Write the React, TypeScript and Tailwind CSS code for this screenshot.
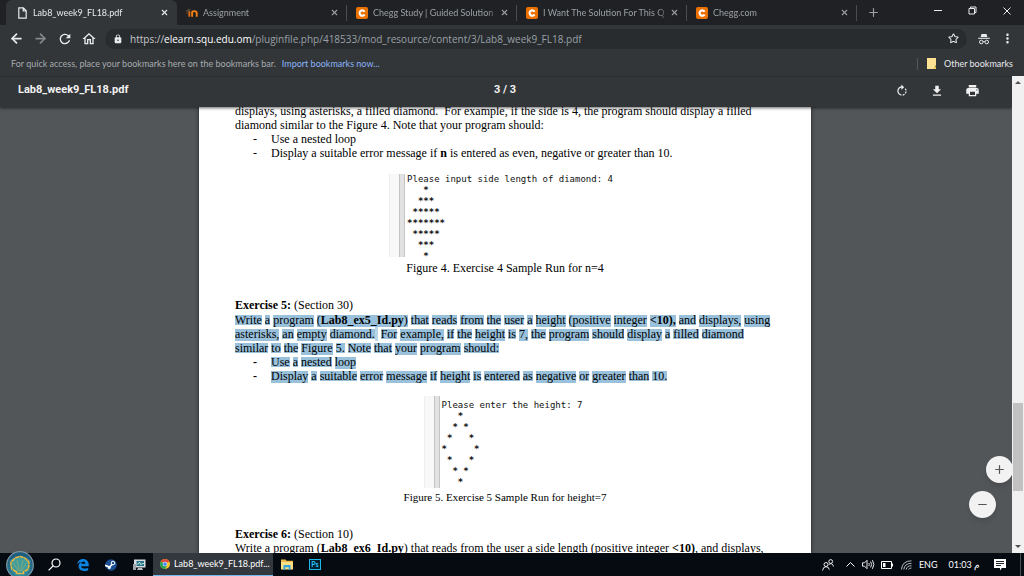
import React from "react";
import { ArrowLeft, ArrowRight, Star, X, Plus, Minus } from "lucide-react";
import { MdRefresh, MdOutlineHome, MdLock, MdRotateRight, MdFileDownload, MdPrint, MdMoreVert } from "react-icons/md";

function FileIcon() {
  return (
    <svg viewBox="0 0 9 12" className="h-3 w-[9px]" fill="none" stroke="#e8eaed" strokeWidth="1.2">
      <path d="M.8.8h4.6L8.2 3.8v7.3H.8zM5.2.8v3.2h3" />
    </svg>
  );
}

function MoodleIcon() {
  return (
    <svg viewBox="0 0 13 10" className="h-2.5 w-[13px]" fill="none">
      <path d="M.5 2.5 3.5 1.2 5 2" stroke="#6b5a4c" strokeWidth="1.2" />
      <path d="M3.6 9V3" stroke="#d9701a" strokeWidth="2" />
      <path d="M1.2 3v3" stroke="#7d4a25" strokeWidth="1" />
      <path d="M6.6 9V4.6Q6.6 3 8.8 3 11.6 3 11.6 5V9" stroke="#f98012" strokeWidth="2" />
    </svg>
  );
}

function CheggIcon() {
  return (
    <svg viewBox="0 0 12 12" className="size-3">
      <rect width="12" height="12" rx="2" fill="#eb7100" />
      <path d="M8.6 4.7A2.7 2.7 0 1 0 8.6 7.5" fill="none" stroke="#fff" strokeWidth="2.1" />
    </svg>
  );
}

const tabs = [
  { title: "Lab8_week9_FL18.pdf", icon: <FileIcon />, active: true },
  { title: "Assignment", icon: <MoodleIcon />, active: false },
  { title: "Chegg Study | Guided Solution", icon: <CheggIcon />, active: false },
  { title: "I Want The Solution For This Q", icon: <CheggIcon />, active: false },
  { title: "Chegg.com", icon: <CheggIcon />, active: false },
];

function TabStrip() {
  return (
    <div className="flex h-[25px] shrink-0 bg-[#202124] pl-[6px] text-[#9aa0a6]">
      {tabs.map((t, i) => (
        <div
          key={i}
          className={
            t.active
              ? "flex max-w-[171px] min-w-0 flex-1 items-center rounded-t-md bg-[#323639] pr-2 pl-[10px] text-[#e8eaed]"
              : "flex max-w-[170px] min-w-0 flex-1 items-center pl-[9px]"
          }
        >
          <span className="flex w-3 shrink-0 justify-center">{t.icon}</span>
          <a
            href="#tab"
            className="ml-[5px] min-w-0 flex-1 overflow-hidden mask-r-from-90% text-[9px] leading-3 whitespace-nowrap"
          >
            {t.title}
          </a>
          <button aria-label={"Close " + t.title} className={t.active ? "" : "mr-[7px]"}>
            <X size={9} strokeWidth={3} />
          </button>
          {!t.active && <span className="h-4 w-px bg-[#4a4c50]" />}
        </div>
      ))}
      <button aria-label="New tab" className="ml-[10px]">
        <Plus size={13} strokeWidth={2.2} />
      </button>
      <div className="ml-auto flex h-[21px] items-center text-[#e8eaed]">
        <button aria-label="Minimize" className="flex w-[34px] justify-center">
          <span className="h-px w-2 bg-[#e8eaed]" />
        </button>
        <button aria-label="Restore" className="flex w-[34px] justify-center">
          <svg viewBox="0 0 9 9" className="size-[9px]" fill="none" stroke="currentColor">
            <path d="M1 2.5h5.500V8H1zM2.500 2.500V1H8v5.500H6.500" />
          </svg>
        </button>
        <button aria-label="Close window" className="flex w-[35px] justify-center">
          <svg viewBox="0 0 8 8" className="size-2" fill="none" stroke="currentColor">
            <path d="M.5.5l7 7M7.500.5l-7 7" />
          </svg>
        </button>
      </div>
    </div>
  );
}

function Toolbar() {
  return (
    <div className="flex h-[27px] shrink-0 items-center bg-[#323639] pl-[9px] text-[#e8eaed]">
      <button aria-label="Back" className="w-6"><ArrowLeft size={15} strokeWidth={2.8} /></button>
      <button aria-label="Forward" className="w-6 text-[#85888b]"><ArrowRight size={15} strokeWidth={2.8} /></button>
      <button aria-label="Reload" className="w-6"><MdRefresh size={16} /></button>
      <button aria-label="Home" className="w-6"><MdOutlineHome size={16} /></button>
      <div className="flex h-5 min-w-0 flex-1 items-center rounded-full bg-[#282c2f] pr-2 pl-2">
        <MdLock size={10} className="shrink-0" />
        <a href="#address" className="ml-[7px] font-['Open_Sans',sans-serif] text-[10px] leading-4 whitespace-nowrap text-[#9aa0a6]">
          <span className="text-[#c6c9cd]">https://</span><span className="text-white">elearn.squ.edu.om</span>/pluginfile.php/418533/mod_resource/content/3/Lab8_week9_FL18.pdf
        </a>
        <button aria-label="Bookmark this page" className="ml-auto"><Star size={11} strokeWidth={2.2} /></button>
      </div>
      <svg viewBox="0 0 12 12" className="mr-[10px] ml-[11px] size-3" fill="none" stroke="currentColor">
        <path d="M3.4 1h5.2l.7 3H2.7z" fill="currentColor" stroke="none" />
        <path d="M.3 5.300h11.400" strokeWidth="1.100" />
        <circle cx="3.300" cy="9" r="1.800" />
        <circle cx="8.700" cy="9" r="1.800" />
        <path d="M5.200 8.600h1.600" />
      </svg>
      <button aria-label="Menu" className="mr-[9px]"><MdMoreVert size={15} /></button>
    </div>
  );
}

function Bookmarks() {
  return (
    <div className="flex h-6 shrink-0 items-center bg-[#323639] px-[11px] pb-px text-[9px] whitespace-nowrap text-[#a6abaf]">
      <span>For quick access, place your bookmarks here on the bookmarks bar.</span>
      <a href="#import" className="ml-[6px] text-[#8ab4f8]">Import bookmarks now...</a>
      <span className="ml-auto h-3 w-px bg-[#56595c]" />
      <svg viewBox="0 0 9 11" className="mr-2 ml-[9px] h-[11px] w-[9px]">
        <path d="M0 0h9v7.500L8 8v3H0z" fill="#fde293" />
        <path d="M7 8.500h2V11H7z" fill="#f7cb4d" />
      </svg>
      <a href="#other" className="text-[#e8eaed]">Other bookmarks</a>
    </div>
  );
}

function ViewerBar() {
  return (
    <div className="relative z-10 grid h-[31px] shrink-0 grid-cols-3 items-center border-t border-[#292c2f] bg-[#323639] pr-[32px] pb-[3px] pl-[18px] font-[Roboto,sans-serif] text-[11px] font-bold text-[#f1f1f1] shadow-[0_1px_3px_rgba(0,0,0,0.6)]">
      <h1>Lab8_week9_FL18.pdf</h1>
      <span className="pl-[12px] text-center">3&nbsp;/&nbsp;3</span>
      <div className="flex justify-end gap-[21px]">
        <button aria-label="Rotate"><MdRotateRight size={14} /></button>
        <button aria-label="Download"><MdFileDownload size={14} /></button>
        <button aria-label="Print"><MdPrint size={15} /></button>
      </div>
    </div>
  );
}

function Sel({ text, bold = false }: { text: string; bold?: boolean }) {
  const words = text.split(" ");
  return (
    <>
      {words.map((w, i) => (
        <React.Fragment key={i}>
          <span
            className={
              (/[gpqyj,()]/.test(w)
                ? "bg-[length:100%_12px] "
                : "bg-[length:100%_10px] ") +
              "bg-linear-to-b from-[#99c1dc] to-[#99c1dc] bg-[position:0_2px] bg-no-repeat" +
              (bold ? " font-bold" : "")
            }
          >
            {w}
          </span>
          {i < words.length - 1 ? " " : ""}
        </React.Fragment>
      ))}
    </>
  );
}

function Bullet({ children, strong = false }: { children: React.ReactNode; strong?: boolean }) {
  return (
    <li className="flex">
      <span className={strong ? "w-[18px] font-bold" : "w-[18px]"}>-</span>
      <span>{children}</span>
    </li>
  );
}

function Run({ prompt, stars, className, textClass = "" }: { prompt: string; stars: string; className: string; textClass?: string }) {
  return (
    <div className={"flex " + className}>
      <span className="w-2.5 border-l border-[#eeeeee] bg-[#f8f8f8]" />
      <span className="mr-[2px] w-[6px] border-x border-[#c4c4c4] bg-[#e2e2e2]" />
      <div className={"font-['DejaVu_Sans_Mono',monospace] text-[9px] leading-[11px] text-[#111] " + textClass}>
        <p>{prompt}</p>
        <pre className="font-['DejaVu_Sans_Mono',monospace] font-bold">{stars}</pre>
      </div>
    </div>
  );
}

const filled = `   *
  ***
 *****
*******
 *****
  ***
   *`;

const hollow = `   *
  * *
 *   *
*     *
 *   *
  * *
   *`;

function Document() {
  return (
    <article className="mr-0.5 -mt-[3px] w-[612px] bg-white px-9 font-['Liberation_Serif',serif] text-[12px] leading-[14px] whitespace-nowrap text-black shadow-[0_0_4px_rgba(0,0,0,0.6)]">
      <p>
        displays, using asterisks, a filled diamond.&nbsp; For example, if the side is 4, the program should display a filled
        <br />
        diamond similar to the Figure 4. Note that your program should:
      </p>
      <ul className="pl-[18px]">
        <Bullet>Use a nested loop</Bullet>
        <Bullet>Display a suitable error message if <b>n</b> is entered as even, negative or greater than 10.</Bullet>
      </ul>
      <figure className="mt-[14px] flex flex-col items-center">
        <Run prompt="Please input side length of diamond: 4" stars={filled} className="h-[83px] pr-2" />
        <figcaption className="mt-1">Figure 4. Exercise 4 Sample Run for n=4</figcaption>
      </figure>
      <h2 className="mt-[23px] font-normal"><b>Exercise 5:</b> (Section 30)</h2>
      <p className="mt-px">
        <Sel text="Write a program" /> <Sel text="(" /><Sel text="Lab8_ex5_Id.py" bold /><Sel text=")" /> <Sel text="that reads from the user a height (positive integer" /> <Sel text="<10)," bold /> <Sel text="and displays, using" />
        <br />
        <Sel text="asterisks, an empty diamond." /><span className="bg-[#b9d5e8]">&nbsp;</span> <Sel text="For example, if the height is 7, the program should display a filled diamond" />
        <br />
        <Sel text="similar to the Figure 5. Note that your program should:" />
      </p>
      <ul className="pl-[18px]">
        <Bullet strong><Sel text="Use a nested loop" /></Bullet>
        <Bullet strong><Sel text="Display a suitable error message if height is entered as negative or greater than 10." /></Bullet>
      </ul>
      <figure className="mt-[13px] flex flex-col items-center">
        <Run prompt="Please enter the height: 7" stars={hollow} className="pr-1" textClass="pt-1" />
        <figcaption className="mt-[2px] text-[11px]">Figure 5. Exercise 5 Sample Run for height=7</figcaption>
      </figure>
      <h2 className="mt-[23px] font-normal"><b>Exercise 6:</b> (Section 10)</h2>
      <p>
        Write a program (<b>Lab8_ex6_Id.py</b>) that reads from the user a side length (positive integer <b>&lt;10)</b>, and displays,
      </p>
    </article>
  );
}

function Scrollbar() {
  return (
    <div className="flex w-3 shrink-0 flex-col items-center bg-[#f1f1f1]">
      <button aria-label="Scroll up" className="flex h-[13px] items-center">
        <svg viewBox="0 0 6 3" className="h-[3px] w-1.5" fill="#505050"><path d="M0 3h6L3 0z" /></svg>
      </button>
      <div className="flex w-full flex-1 flex-col items-center">
        <span className="flex-[314]" />
        <span className="w-2.5 flex-[88] bg-[#c1c1c1]" />
        <span className="flex-[49]" />
      </div>
      <button aria-label="Scroll down" className="flex h-[13px] items-center">
        <svg viewBox="0 0 6 3" className="h-[3px] w-1.5" fill="#505050"><path d="M0 0h6L3 3z" /></svg>
      </button>
    </div>
  );
}

function StartIcon() {
  return (
    <svg viewBox="0 0 28 28" className="size-7">
      <defs>
        <radialGradient id="orb" cx="50%" cy="65%" r="55%">
          <stop offset="0" stopColor="#3cb0b8" />
          <stop offset="1" stopColor="#1d5c7c" />
        </radialGradient>
      </defs>
      <circle cx="14" cy="14" r="13.3" fill="url(#orb)" stroke="#7895a3" strokeWidth="1.3" />
      <path d="M2.500 11Q14 0 25.500 11 14 8 2.500 11z" fill="#9cc3cd" opacity=".4" />
      <path d="M10.500 20.800 6 18.500 4.800 13.500q0-3 2.500-4.400Q8.800 6.200 11.700 6.300q2.300-1.500 4.600 0 2.900-.1 4.400 2.800 2.500 1.400 2.500 4.400L22 18.500l-4.500 2.300v1.800h-7z" fill="#3f9d9d" stroke="#f0b63c" strokeWidth="1.500" strokeDasharray="4 .6" />
      <path d="M12.500 20 7.500 12M13.500 20 11 9M14.500 20 17 9M15.500 20 20.500 12" stroke="#c9b45c" strokeWidth=".8" opacity=".6" />
    </svg>
  );
}

function SearchIcon() {
  return (
    <svg viewBox="0 0 13 13" className="size-[13px]" fill="none" stroke="#fff" strokeWidth="1.2">
      <circle cx="8" cy="5" r="4" /><path d="M5 8 .6 12.400" />
    </svg>
  );
}

function EdgeIcon() {
  return (
    <svg viewBox="0 0 24 24" className="size-3" fill="#0a84e0">
      <path d="M.5 10.600C1.200 4.500 5.600.2 12.200.2c7 0 11.300 4.900 11.300 11.500v2.600H8.200c.1 3.300 3.200 4.900 6.800 4.900 3 0 5.400-.8 7.400-1.900v5C20 23.400 17 24 13.900 24 7.500 24 3.300 20.300 3.300 14.700c0-4.300 2.300-7.500 6-9.200C5.700 5.500 2.700 7.500.5 10.600zm8-.9h8.200c0-2.700-1.300-4.500-3.900-4.500-2.400 0-4 1.900-4.300 4.500z" />
    </svg>
  );
}

function SteamIcon() {
  return (
    <svg viewBox="0 0 12 12" className="size-3">
      <circle cx="6" cy="6" r="5.800" fill="#1b4f91" />
      <path d="M0 6.300 4.500 8 7.500 5" stroke="#fff" strokeWidth="1.600" fill="none" />
      <circle cx="8" cy="4" r="1.800" fill="#1b4f91" stroke="#fff" />
      <circle cx="4.300" cy="8.500" r="1.500" fill="#fff" />
    </svg>
  );
}

function MonitorIcon() {
  return (
    <svg viewBox="0 0 13 12" className="h-3 w-[13px]">
      <path d="M1 .5h11.500v8H1z" fill="#d9dee2" />
      <path d="M3.500 2h7.500v5h-7.500z" fill="#2a7287" />
      <path d="M3.500 5h2l1-2 1.500 3 1-1.500h2" stroke="#c8f2e4" fill="none" strokeWidth=".8" />
      <path d="M0 5h3v6H0z" fill="#9da4a9" /><path d="M5 9h4l1 2H4z" fill="#b7bdc1" />
    </svg>
  );
}

function ChromeIcon() {
  return (
    <svg viewBox="0 0 20 20" className="size-2.5">
      <circle cx="10" cy="10" r="10" fill="#f7c52b" />
      <path d="M10 10 1.340 5A10 10 0 0 1 18.660 5z" fill="#de4b3d" />
      <path d="M10 10 1.340 5A10 10 0 0 0 10 20l4.300-7.500z" fill="#27a35b" />
      <circle cx="10" cy="10" r="4.700" fill="#fff" /><circle cx="10" cy="10" r="3.700" fill="#4285f4" />
    </svg>
  );
}

function FolderIcon() {
  return (
    <svg viewBox="0 0 12 11" className="h-[11px] w-3">
      <path d="M0 .5h4.500l1 1.300H12V10H0z" fill="#e9b94d" />
      <path d="M0 3h12v7.500H0z" fill="#fbdf85" />
      <path d="M2.500 6h7v4.700H7.700V8.300H4.300v2.400H2.500z" fill="#35a3e0" />
    </svg>
  );
}

function Taskbar() {
  return (
    <footer className="flex h-[23px] shrink-0 items-center bg-[#060b12] text-[9px] leading-3 whitespace-nowrap text-white">
      <button aria-label="Start" className="relative z-10 -my-1 ml-[6px]"><StartIcon /></button>
      <button aria-label="Search" className="ml-[14px]"><SearchIcon /></button>
      <button aria-label="Edge" className="ml-4"><EdgeIcon /></button>
      <button aria-label="Steam" className="ml-4"><SteamIcon /></button>
      <button aria-label="Monitor" className="ml-4"><MonitorIcon /></button>
      <button className="ml-[7px] flex h-full w-[120px] items-center border-b border-[#76b9ed] bg-[#33383e] pl-[7px]">
        <ChromeIcon /><span className="ml-1">Lab8_week9_FL18.pdf...</span>
      </button>
      <button aria-label="File Explorer" className="ml-2"><FolderIcon /></button>
      <button aria-label="Photoshop" className="ml-4 flex h-[11px] w-3 items-center justify-center border border-[#1ab8e8] bg-[#03202e] text-[7px] leading-[7px] font-bold text-[#26c9ff]">Ps</button>
      <div className="ml-auto flex items-center">
        <svg viewBox="0 0 12 12" className="size-3" fill="none" stroke="#fff" strokeWidth=".9">
          <circle cx="4" cy="5.500" r="2" /><path d="M.6 11.500Q1 7.700 4 7.700t3.300 3" />
          <circle cx="8.700" cy="2.500" r="1.900" /><path d="M6.700 5.500q4-2.300 4.700 2" />
        </svg>
        <svg viewBox="0 0 9 5" className="ml-3 h-[5px] w-[9px]" fill="none" stroke="#fff"><path d="M.5 4.500l4-4 4 4" /></svg>
        <svg viewBox="0 0 13 11" className="ml-[7px] h-[11px] w-[13px]" fill="none" stroke="#fff" strokeWidth=".9">
          <path d="M.5 3.800h2L5 1.300v8.400L2.500 7.200h-2zM6.800 4q1 1.500 0 3M8.600 2.600q2 2.900 0 5.800M10.400 1.200q3 4.300 0 8.600" />
        </svg>
        <svg viewBox="0 0 12 8" className="ml-[6px] h-2 w-3" fill="none" stroke="#fff">
          <path d="M.5.5h10v7H.5zM11.500 2.500v3" /><path d="M2 2h2.500v4H2z" fill="#fff" stroke="none" />
        </svg>
        <svg viewBox="0 0 11 10" className="ml-2 h-2.5 w-[11px]" fill="none" stroke="#c8ccd0" strokeWidth=".9">
          <path d="M.5 9.500Q1 1 10.500.8M2.800 9.500Q3.300 3.500 10.500 3.300M5.200 9.500q.5-3.700 5.300-3.800M7.500 9.500q.3-1.400 3-1.500" />
        </svg>
        <span className="ml-[7px]">ENG</span>
        <time className="ml-[11px]">01:03 م</time>
        <svg viewBox="0 0 12 12" className="ml-[14px] size-3"><path d="M0 0h12v9H7.800L6 11.500V9H0z" fill="#fff" /><path d="M2 2.500h8M2 4.500h8M2 6.500h5" stroke="#060b12" strokeWidth=".9" /></svg>
        <span className="ml-[14px] h-[23px] w-px bg-[#4a4e53]" />
        <span className="w-[3px]" />
      </div>
    </footer>
  );
}

export default function App() {
  return (
    <div className="flex h-screen flex-col overflow-hidden bg-[#525659] font-['Lato','Noto_Sans',sans-serif]">
      <TabStrip />
      <Toolbar />
      <Bookmarks />
      <div className="flex min-h-0 flex-1">
        <main className="relative flex min-w-0 flex-1 flex-col overflow-hidden">
          <ViewerBar />
          <div className="flex min-h-0 flex-1 justify-center"><Document /></div>
          <button aria-label="Zoom in" className="absolute right-[-1px] bottom-[70px] flex size-[27px] items-center justify-center rounded-full bg-[#f2f2f2] text-[#555] shadow-md">
            <Plus size={13} strokeWidth={2.200} />
          </button>
          <button aria-label="Zoom out" className="absolute right-4 bottom-[35px] flex size-[27px] items-center justify-center rounded-full bg-[#f2f2f2] text-[#555] shadow-md">
            <Minus size={13} strokeWidth={2.200} />
          </button>
        </main>
        <Scrollbar />
      </div>
      <Taskbar />
    </div>
  );
}
